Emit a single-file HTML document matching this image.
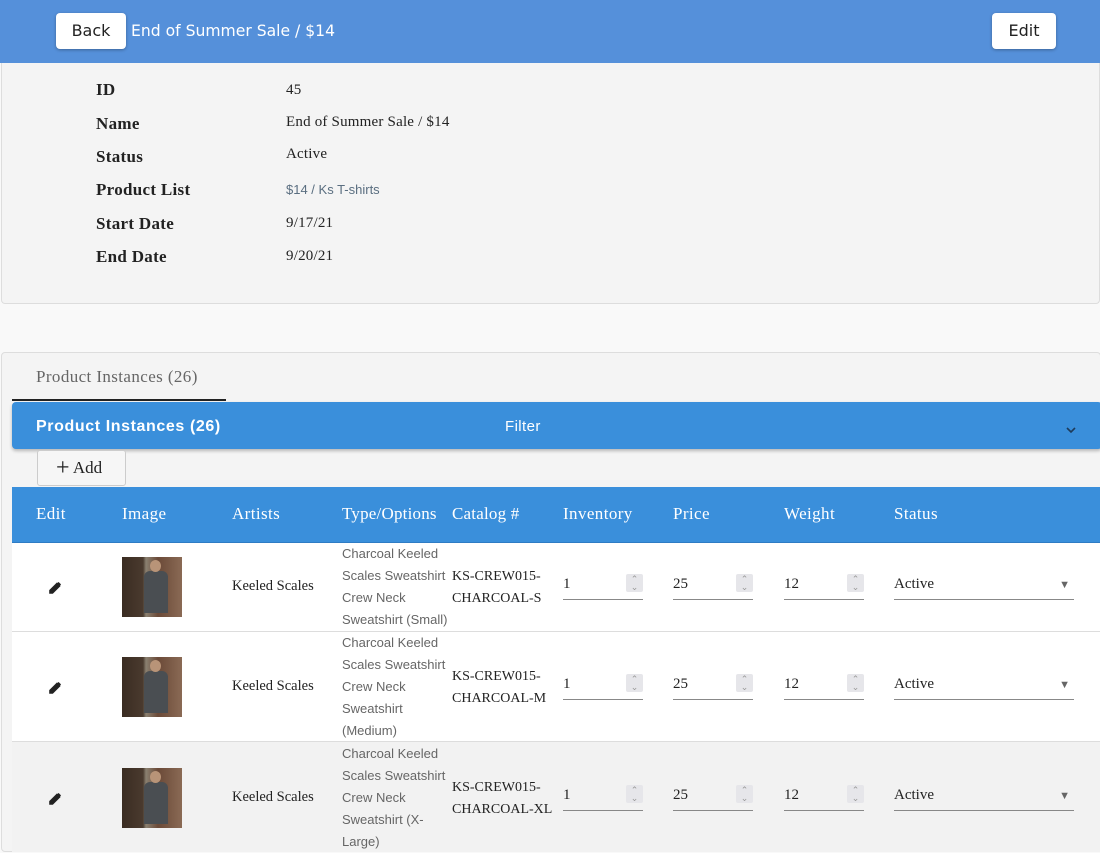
<!DOCTYPE html>
<html><head><meta charset="utf-8"><style>
*{box-sizing:border-box;margin:0;padding:0}
body{width:1100px;height:848px;overflow:hidden;background:#f9f9f9;position:relative;font-family:"Liberation Serif",serif;color:#222}
.a{position:absolute;white-space:nowrap}
.hdr{left:0;top:0;width:1100px;height:63px;background:#5590da}
.btn{background:#fff;border-radius:4px;height:36px;top:13px;font:16px "DejaVu Sans",sans-serif;color:#222;text-align:center;line-height:36px;box-shadow:0 1px 3px rgba(0,0,0,.3)}
.lbl{left:96px;font-weight:bold;font-size:17px;letter-spacing:.3px;color:#222}
.val{left:286px;font-size:15px;letter-spacing:.2px;color:#222}
.th{top:504px;color:#fff;font-size:17px;letter-spacing:.4px}
.sans{font-family:"Liberation Sans",sans-serif}
.typ{font-family:"Liberation Sans",sans-serif;font-size:13px;color:#666;line-height:22px;white-space:normal;width:110px}
.cat{font-size:14px;line-height:22px;white-space:normal;width:110px}
.inp{border-bottom:1px solid #888;height:30px;font-size:15px;line-height:28px}
.spin{position:absolute;right:0;top:4px;width:17px;height:18px;background:#e6e6ea;border-radius:2px;color:#999;font-size:9px;line-height:8px;text-align:center;padding-top:1px}
.img{width:60px;height:60px;background:linear-gradient(90deg,#3a2c22 0,#4a3a2e 35%,#8a8070 40%,#6b4a38 60%,#8a6a55 100%);overflow:hidden}
.img i{position:absolute;left:22px;top:14px;width:24px;height:42px;background:#4a4e52;border-radius:6px 6px 0 0}
.img b{position:absolute;left:28px;top:3px;width:11px;height:12px;background:#b89478;border-radius:50%}
</style></head><body>
<div class="a hdr"></div>
<div class="a btn" style="left:56px;width:70px">Back</div>
<div class="a" style="left:131px;top:22px;font:15.6px 'DejaVu Sans',sans-serif;color:#fff">End of Summer Sale / $14</div>
<div class="a btn" style="left:992px;width:64px">Edit</div>

<div class="a" style="left:1px;top:63px;width:1099px;height:241px;background:#f4f4f4;border:1px solid #ddd;border-top:none;border-radius:0 0 4px 4px"></div>
<div class="a lbl" style="top:80px">ID</div><div class="a val" style="top:82px">45</div>
<div class="a lbl" style="top:114px">Name</div><div class="a val" style="top:114px">End of Summer Sale / $14</div>
<div class="a lbl" style="top:147px">Status</div><div class="a val" style="top:146px">Active</div>
<div class="a lbl" style="top:180px">Product List</div><div class="a val sans" style="top:182px;font-size:13px;letter-spacing:0;color:#5a6e80">$14 / Ks T-shirts</div>
<div class="a lbl" style="top:214px">Start Date</div><div class="a val" style="top:215px">9/17/21</div>
<div class="a lbl" style="top:247px">End Date</div><div class="a val" style="top:248px">9/20/21</div>

<div class="a" style="left:1px;top:352px;width:1100px;height:500px;background:#f4f4f4;border:1px solid #ddd;border-radius:4px"></div>
<div class="a" style="left:36px;top:367px;font-size:17px;letter-spacing:.4px;color:#666">Product Instances (26)</div>
<div class="a" style="left:12px;top:399px;width:214px;height:2px;background:#222"></div>
<div class="a" style="left:12px;top:402px;width:1090px;height:47px;background:#3a8fdb;border-radius:4px;box-shadow:0 2px 3px rgba(0,0,0,.25)"></div>
<div class="a sans" style="left:36px;top:418px;font-size:16px;font-weight:bold;color:#fff;letter-spacing:.6px">Product Instances (26)</div>
<div class="a sans" style="left:505px;top:418px;font-size:15px;color:#fff;letter-spacing:.4px">Filter</div>
<svg class="a" style="left:1066px;top:427px" width="10" height="7"><path d="M1 1l4 4 4-4" stroke="#1e3b5a" stroke-width="1.6" fill="none"/></svg>
<div class="a" style="left:37px;top:450px;width:89px;height:36px;border:1px solid #ccc;border-radius:3px;background:#f6f6f6;font-size:17px;line-height:34px;padding-left:18px"><span style="font-size:24px;vertical-align:-2px">+</span> Add</div>

<div class="a" style="left:12px;top:487px;width:1090px;height:56px;background:#3a8fdb;border-bottom:1px solid #2f7cc4"></div>
<div class="a th" style="left:36px">Edit</div><div class="a th" style="left:122px">Image</div><div class="a th" style="left:232px">Artists</div><div class="a th" style="left:342px;letter-spacing:.2px">Type/Options</div><div class="a th" style="left:452px;letter-spacing:.2px">Catalog #</div><div class="a th" style="left:563px">Inventory</div><div class="a th" style="left:673px">Price</div><div class="a th" style="left:784px">Weight</div><div class="a th" style="left:894px">Status</div>

<div class="a" style="left:12px;top:543px;width:1090px;height:89px;background:#fff;border-bottom:1px solid #ddd"></div>
<div class="a" style="left:12px;top:632px;width:1090px;height:110px;background:#fff;border-bottom:1px solid #ddd"></div>
<div class="a" style="left:12px;top:742px;width:1090px;height:110px;background:#f2f2f2"></div>

<svg class="a" style="left:49px;top:582px" width="12" height="12"><path d="M1 11v-2.5l7-7 2.5 2.5-7 7z M9 0.5l2.5 2.5" stroke="#222" stroke-width="1.6" fill="#222"/></svg>
<div class="a img" style="left:122px;top:557px"><i></i><b></b></div>
<div class="a" style="left:232px;top:578px;font-size:14.5px">Keeled Scales</div>
<div class="a typ" style="left:342px;top:543px">Charcoal Keeled Scales Sweatshirt Crew Neck Sweatshirt (Small)</div>
<div class="a cat" style="left:452px;top:566px">KS-CREW015-CHARCOAL-S</div>

<svg class="a" style="left:49px;top:682px" width="12" height="12"><path d="M1 11v-2.5l7-7 2.5 2.5-7 7z M9 0.5l2.5 2.5" stroke="#222" stroke-width="1.6" fill="#222"/></svg>
<div class="a img" style="left:122px;top:657px"><i></i><b></b></div>
<div class="a" style="left:232px;top:678px;font-size:14.5px">Keeled Scales</div>
<div class="a typ" style="left:342px;top:632px">Charcoal Keeled Scales Sweatshirt Crew Neck Sweatshirt (Medium)</div>
<div class="a cat" style="left:452px;top:666px">KS-CREW015-CHARCOAL-M</div>

<svg class="a" style="left:49px;top:793px" width="12" height="12"><path d="M1 11v-2.5l7-7 2.5 2.5-7 7z M9 0.5l2.5 2.5" stroke="#222" stroke-width="1.6" fill="#222"/></svg>
<div class="a img" style="left:122px;top:768px"><i></i><b></b></div>
<div class="a" style="left:232px;top:789px;font-size:14.5px">Keeled Scales</div>
<div class="a typ" style="left:342px;top:743px">Charcoal Keeled Scales Sweatshirt Crew Neck Sweatshirt (X-Large)</div>
<div class="a cat" style="left:452px;top:777px">KS-CREW015-CHARCOAL-XL</div>

<div class="a inp" style="left:563px;top:570px;width:80px">1<div class="spin">⌃<br>⌄</div></div>
<div class="a inp" style="left:673px;top:570px;width:80px">25<div class="spin">⌃<br>⌄</div></div>
<div class="a inp" style="left:784px;top:570px;width:80px">12<div class="spin">⌃<br>⌄</div></div>
<div class="a inp" style="left:894px;top:570px;width:180px">Active<span style="position:absolute;right:4px;top:1px;color:#666;font-size:11px">▼</span></div>

<div class="a inp" style="left:563px;top:670px;width:80px">1<div class="spin">⌃<br>⌄</div></div>
<div class="a inp" style="left:673px;top:670px;width:80px">25<div class="spin">⌃<br>⌄</div></div>
<div class="a inp" style="left:784px;top:670px;width:80px">12<div class="spin">⌃<br>⌄</div></div>
<div class="a inp" style="left:894px;top:670px;width:180px">Active<span style="position:absolute;right:4px;top:1px;color:#666;font-size:11px">▼</span></div>

<div class="a inp" style="left:563px;top:781px;width:80px">1<div class="spin">⌃<br>⌄</div></div>
<div class="a inp" style="left:673px;top:781px;width:80px">25<div class="spin">⌃<br>⌄</div></div>
<div class="a inp" style="left:784px;top:781px;width:80px">12<div class="spin">⌃<br>⌄</div></div>
<div class="a inp" style="left:894px;top:781px;width:180px">Active<span style="position:absolute;right:4px;top:1px;color:#666;font-size:11px">▼</span></div>
</body></html>
